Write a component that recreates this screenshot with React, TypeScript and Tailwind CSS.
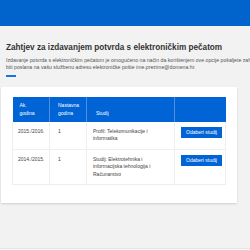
export default function App() {
  const rows = [
    { year: '2015./2016.', nast: '1', studij: ['Profil: Telekomunikacije i', 'informatika'] },
    { year: '2014./2015.', nast: '1', studij: ['Studij: Elektrotehnika i', 'informacijska tehnologija i', 'Računarstvo'] },
  ]

  return (
    <div className="w-[250px] h-[250px] overflow-hidden bg-[#f2f2f2] font-['Liberation_Sans',Arial,sans-serif] flex flex-col">
      {/* zaglavlje */}
      <div className="h-[26px] shrink-0 bg-[#0064cc]" />

      <div className="px-[6px] pt-[17px] overflow-hidden">
        <h1 className="text-[8.2px] leading-[10px] font-bold text-[#333] whitespace-nowrap">
          Zahtjev za izdavanjem potvrda s elektroničkim pečatom
        </h1>
        <p className="mt-[3.5px] text-[5.2px] leading-[7px] text-[#555] whitespace-nowrap">
          Izdavanje potvrda s elektroničkim pečatom je omogućeno na način da korištenjem ove opcije pošaljete zahtjev
          <br />
          biti poslana na vašu službenu adresu elektroničke pošte ime.prezime@domena.hr.
        </p>
        <div className="mt-[4.5px] w-[10px] h-[1.5px] bg-[#1a73d9]" />
      </div>

      {/* kartica */}
      <div className="mt-[10px] ml-[1px] w-[236px] bg-white shadow-[0_1px_2px_rgba(0,0,0,0.15)] pl-[11px] pr-[10px] pt-[10px] pb-[18px]">
        <table className="w-[214px] border-collapse text-[5px] leading-[7.6px]">
          <thead>
            <tr className="bg-[#0064d6] text-white h-[25px]">
              <th className="w-[37px] border-r border-[#4d8fe0] pl-[7px] pb-[4px] text-left font-normal align-bottom">
                Ak.<br />godina
              </th>
              <th className="w-[37px] border-r border-[#4d8fe0] pl-[8px] pb-[4px] text-left font-normal align-bottom">
                Nastavna<br />godina
              </th>
              <th className="w-[88px] border-r border-[#4d8fe0] pl-[9px] pb-[4px] text-left font-normal align-bottom">
                Studij
              </th>
              <th />
            </tr>
          </thead>
          <tbody className="text-[#444]">
            {rows.map((r) => (
              <tr key={r.year} className="border-b border-[#eeeeee]">
                <td className="border-l border-r border-[#eeeeee] pl-[5px] pt-[6px] pb-[6px] align-top">{r.year}</td>
                <td className="border-r border-[#eeeeee] pl-[8px] pt-[6px] pb-[6px] align-top">{r.nast}</td>
                <td className="border-r border-[#eeeeee] pl-[6px] pt-[6px] pb-[6px] align-top">
                  {r.studij.map((s) => (
                    <div key={s}>{s}</div>
                  ))}
                </td>
                <td className="border-r border-[#eeeeee] pl-[6px] pt-[5px] align-top">
                  <button className="w-[41px] h-[11px] bg-[#0064d6] text-white text-[5px] leading-[11px] text-center">
                    Odaberi studij
                  </button>
                </td>
              </tr>
            ))}
          </tbody>
        </table>
      </div>

      <div className="flex-1" />
      <div className="h-[2px] bg-[#fafafa] border-t border-[#e6e6e6]" />
    </div>
  )
}
